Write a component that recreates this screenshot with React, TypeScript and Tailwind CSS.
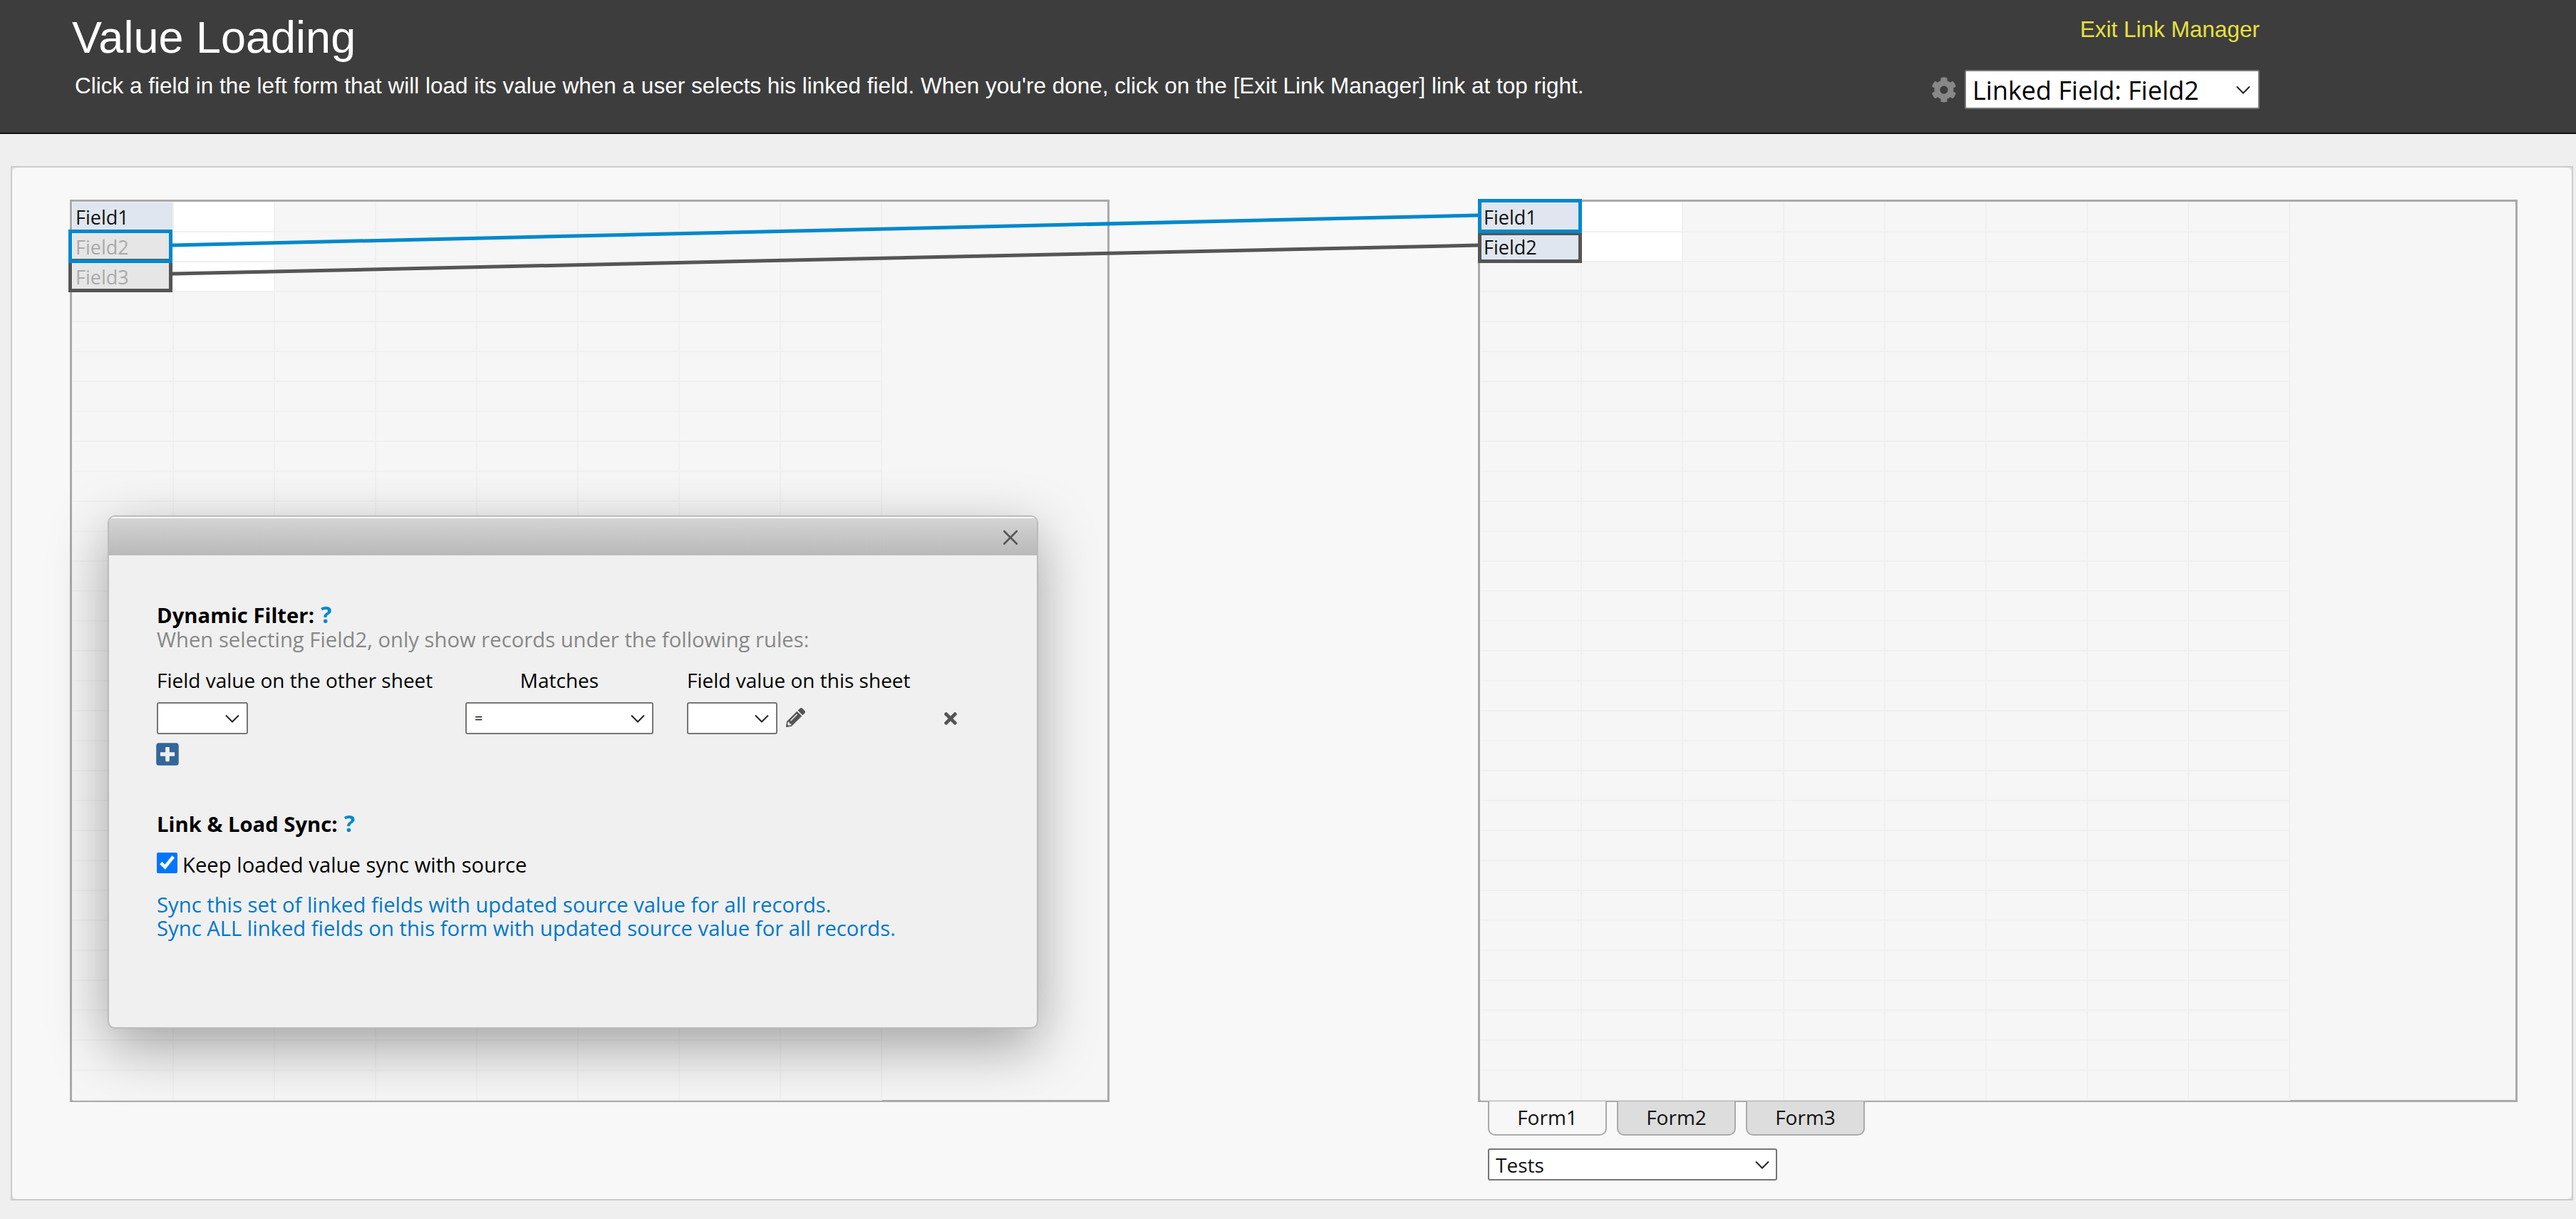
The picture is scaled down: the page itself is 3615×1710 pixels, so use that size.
import { FaCog, FaPencilAlt, FaPlusSquare, FaTimes } from "react-icons/fa";

const columns = Array.from({ length: 8 });
const rows = Array.from({ length: 30 });

type FormGridProps = {
  fields: { name: string; muted?: boolean }[];
  whiteRows: number;
  outlines: { row: number; color: string; left: number; top: number; bottom: number; z: string }[];
};

function FormGrid({ fields, whiteRows, outlines }: FormGridProps) {
  return (
    <div className="w-[1459px] h-[1266px] border-[3px] border-[#aaaaaa] pl-px pt-px bg-[#f6f6f6] overflow-visible">
      <div className="relative grid grid-cols-[repeat(8,142px)] auto-rows-[42px]">
        {rows.map((_, r) =>
          columns.map((_, c) => {
            const field = c === 0 ? fields[r] : undefined;
            const white = c === 1 && r < whiteRows;
            return (
              <div
                key={`${r}-${c}`}
                className={`border-r-2 border-b-2 border-[#f0f0f0] ${
                  field ? (field.muted ? "bg-[#e6e6e6]" : "bg-[#e0e6ef]") : white ? "bg-white" : "bg-[#f6f6f6]"
                }`}
              >
                {field && (
                  <span
                    className={`block pl-[4px] text-[27px] leading-[42px] ${field.muted ? "text-[#aaaaaa]" : "text-[#111111]"}`}
                  >
                    {field.name}
                  </span>
                )}
              </div>
            );
          })
        )}
        {outlines.map((o) => (
          <div
            key={o.row}
            className={`absolute w-[146px] border-[5px] ${o.z}`}
            style={{
              borderColor: o.color,
              left: o.left,
              top: o.row * 42 + o.top,
              height: 42 - o.top + o.bottom,
            }}
          />
        ))}
      </div>
    </div>
  );
}

function Help() {
  return <span className="ml-[9px] text-[32px] leading-[34px] text-[#0088cc] font-bold">?</span>;
}

type SelectProps = {
  value?: string;
  className: string;
  selectClassName?: string;
  chevronRight?: string;
};

function Select({ value = "", className, selectClassName = "", chevronRight = "right-[12px]" }: SelectProps) {
  return (
    <div className={`relative ${className}`}>
      <select
        className={`appearance-none w-full h-full bg-white border-2 border-[#767676] rounded-[3px] ${selectClassName}`}
      >
        <option>{value}</option>
      </select>
      <svg
        width="20"
        height="12"
        viewBox="0 0 20 12"
        className={`absolute top-1/2 -translate-y-1/2 ${chevronRight} pointer-events-none`}
      >
        <path d="M1 1.5 L10 10.5 L19 1.5" stroke="#222222" strokeWidth="2" fill="none" />
      </svg>
    </div>
  );
}

function Dialog() {
  return (
    <div className="absolute left-[134px] top-[488px] w-[1306px] h-[720px] z-20 rounded-[10px] border-2 border-[#bbbbbb] bg-[#f0f0f0] shadow-[0_25px_80px_rgba(0,0,0,0.35)] overflow-hidden">
      {/* title bar */}
      <div className="h-[54px] border-t-2 border-white bg-gradient-to-b from-[#d4d4d4] to-[#b9b9b9] flex items-center justify-end pr-[27px]">
        <svg width="20" height="20" viewBox="0 0 20 20" className="text-[#555555] translate-y-px">
          <path d="M1 1 L19 19 M19 1 L1 19" stroke="currentColor" strokeWidth="2.6" strokeLinecap="round" fill="none" />
        </svg>
      </div>

      <div className="pl-[67px] pt-[66px] text-[29.25px] leading-[34px] text-black">
        <div className="font-bold">
          Dynamic Filter:
          <Help />
        </div>
        <div className="text-[#888888]">When selecting Field2, only show records under the following rules:</div>

        <div className="mt-[23px] grid grid-cols-[433px_311px_360px] items-start text-[28px] font-medium">
          <div className="whitespace-nowrap">Field value on the other sheet</div>
          <div className="w-[264px] text-center">Matches</div>
          <div className="whitespace-nowrap">Field value on this sheet</div>
        </div>

        <div className="mt-[14px] grid grid-cols-[433px_311px_359px_40px] items-center">
          <Select className="w-[128px] h-[45px] text-[20px]" />
          <Select className="w-[264px] h-[45px] text-[20px]" selectClassName="pl-[11px]" value="=" />
          <div className="flex items-center">
            <Select className="w-[127px] h-[45px] text-[20px]" />
            <FaPencilAlt className="ml-[12px] w-[27px] h-[27px] text-[#555555] -translate-y-[1px]" />
          </div>
          <FaTimes className="w-[26px] h-[26px] -ml-[2px] text-[#555555]" />
        </div>

        <FaPlusSquare className="mt-[10px] w-[32px] h-[36px] text-[#336699] -ml-[1px]" />

        <div className="mt-[62px] font-bold">
          Link &amp; Load Sync:
          <Help />
        </div>

        <label className="mt-[23px] flex items-start h-[34px]">
          <input type="checkbox" defaultChecked className="w-[29px] h-[29px] m-0 accent-[#0075ff]" />
          <span className="ml-[7px]">Keep loaded value sync with source</span>
        </label>

        <div className="mt-[23px] text-[#0078c8] leading-[33px]">
          <div>Sync this set of linked fields with updated source value for all records.</div>
          <div>Sync ALL linked fields on this form with updated source value for all records.</div>
        </div>
      </div>
    </div>
  );
}

export default function App() {
  return (
    <div className="w-[3615px] h-[1710px] overflow-hidden bg-[#efefef] font-['Open_Sans',sans-serif]">
      {/* top bar */}
      <header className="h-[188px] bg-[#3d3d3d] border-b-2 border-[#111111] flex justify-between pr-[444px] font-['Liberation_Sans',sans-serif]">
        <div className="pl-[101px] text-white">
          <h1 className="text-[63px] leading-[62px] pt-[21px]">Value Loading</h1>
          <p className="pl-[4px] pt-[18px] text-[31.5px] leading-[38px]">
            Click a field in the left form that will load its value when a user selects his linked field. When you're
            done, click on the [Exit Link Manager] link at top right.
          </p>
        </div>
        <div className="flex flex-col items-end">
          <a className="pt-[22px] text-[31.5px] leading-[38px] text-[#e6e03f]">Exit Link Manager</a>
          <div className="mt-[38px] flex items-center">
            <FaCog className="w-[36px] h-[36px] text-[#888888] mr-[11px]" />
            <Select
              className="w-[414px] h-[55px] text-[36px] text-black font-['Open_Sans',sans-serif]"
              selectClassName="pl-[9px]"
              value="Linked Field: Field2"
              chevronRight="right-[13px]"
            />
          </div>
        </div>
      </header>

      <main className="pt-[45px] px-[15px]">
        <div className="h-[1451px] w-[3596px] border-2 border-[#cccccc] bg-[#e6e6e6]">
          <div className="relative h-full rounded-[8px] bg-[#f8f8f8] pl-[81px] pt-[45px] flex gap-[517px]">
            <FormGrid
              fields={[{ name: "Field1" }, { name: "Field2", muted: true }, { name: "Field3", muted: true }]}
              whiteRows={3}
              outlines={[
                { row: 2, color: "#555555", left: -6, top: -5, bottom: 0, z: "z-[1]" },
                { row: 1, color: "#0088cc", left: -6, top: -4, bottom: 1, z: "z-[2]" },
              ]}
            />
            <div>
              <FormGrid
                fields={[{ name: "Field1" }, { name: "Field2" }]}
                whiteRows={2}
                outlines={[
                  { row: 1, color: "#555555", left: -4, top: -1, bottom: 1, z: "z-[1]" },
                  { row: 0, color: "#0088cc", left: -4, top: -5, bottom: 1, z: "z-[2]" },
                ]}
              />
              <div className="pl-[14px]">
                <div className="flex gap-[14px] -mt-[1px]">
                  <div className="w-[167px] h-[48px] border-2 border-t-0 border-[#aaaaaa] rounded-b-[10px] bg-[#f7f7f7] text-center text-[28px] leading-[44px] text-[#111111]">
                    Form1
                  </div>
                  <div className="w-[167px] h-[48px] border-2 border-t-0 border-[#aaaaaa] rounded-b-[10px] bg-[#dddddd] text-center text-[28px] leading-[44px] text-[#111111]">
                    Form2
                  </div>
                  <div className="w-[167px] h-[48px] border-2 border-t-0 border-[#aaaaaa] rounded-b-[10px] bg-[#dddddd] text-center text-[28px] leading-[44px] text-[#111111]">
                    Form3
                  </div>
                </div>
                <Select
                  className="mt-[18px] w-[406px] h-[45px] text-[28px] text-[#111111]"
                  selectClassName="pl-[9px]"
                  value="Tests"
                  chevronRight="right-[11px]"
                />
              </div>
            </div>

            {/* link lines between forms */}
            <svg className="absolute left-0 top-0 z-10 pointer-events-none" width="3592" height="1447" viewBox="17 235 3592 1447">
              <line x1="242" y1="344" x2="2075" y2="302" stroke="#0088cc" strokeWidth="5" />
              <line x1="242" y1="384" x2="2075" y2="344" stroke="#555555" strokeWidth="5" />
            </svg>

            <Dialog />
          </div>
        </div>
      </main>
    </div>
  );
}
